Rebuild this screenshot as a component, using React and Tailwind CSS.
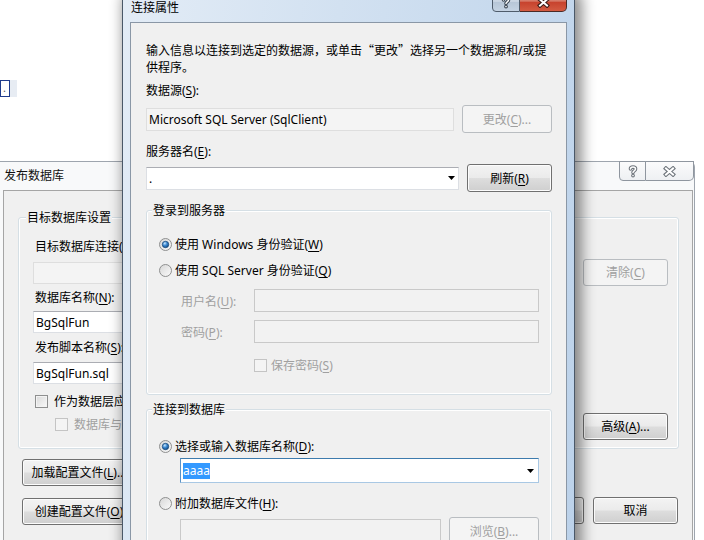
import React from "react";

const U = ({ children }) => <span className="underline decoration-1 underline-offset-[2px]">{children}</span>;

function Btn({ children, disabled, className = "" }) {
  const tone = disabled
    ? "border-[#b9bdc1] bg-[#f4f4f4] text-[#a0a0a0]"
    : "border-[#707070] bg-[linear-gradient(#f3f3f3_0%,#ebebeb_48%,#dddddd_52%,#cfcfcf_100%)] text-black shadow-[inset_0_0_0_1px_#fcfcfc]";
  return <div className={`flex shrink-0 items-center justify-center whitespace-nowrap rounded-[3px] border ${tone} ${className}`}>{children}</div>;
}

function Box({ children, variant = "white", className = "" }) {
  const tone = {
    white: "border-[#dcdfe4] border-t-[#abadb3] bg-white",
    off: "border-[#c9c9c9] bg-[#f2f2f2]",
    faint: "border-[#dedede] bg-[#f4f4f4]",
    focus: "border-[#a9c8e4] border-t-[#3d7bad] border-l-[#5c93c6] bg-white",
  }[variant];
  return <div className={`flex shrink-0 items-center border ${tone} ${className}`}>{children}</div>;
}

const Arrow = () => (
  <svg width="7" height="4" viewBox="0 0 7 4" className="shrink-0">
    <path d="M0 0h7L3.5 4z" fill="#000" />
  </svg>
);

function Radio({ checked }) {
  return (
    <svg width="13" height="13" viewBox="0 0 13 13" className="shrink-0">
      <defs>
        <linearGradient id="radioFace" x1="0" y1="0" x2="1" y2="1">
          <stop offset="0" stopColor="#d6d6d6" />
          <stop offset="1" stopColor="#fbfbfb" />
        </linearGradient>
        <radialGradient id="radioDot" cx="0.38" cy="0.32" r="0.75">
          <stop offset="0" stopColor="#c8e8ff" />
          <stop offset="0.45" stopColor="#3d8ad3" />
          <stop offset="1" stopColor="#0c457f" />
        </radialGradient>
      </defs>
      <circle cx="6.5" cy="6.5" r="6" fill="url(#radioFace)" stroke="#8e8f8f" />
      {checked && <circle cx="6.5" cy="6.5" r="3.2" fill="url(#radioDot)" stroke="#1b4a7a" strokeWidth="0.8" />}
    </svg>
  );
}

function Check({ disabled }) {
  return (
    <div
      className={`h-[13px] w-[13px] shrink-0 border ${
        disabled ? "border-[#c4c4c4] bg-[#f4f4f4]" : "border-[#8e8f8f] bg-[linear-gradient(135deg,#d9d9d9,#f9f9f9)] shadow-[inset_0_0_0_1px_#f3f3f3]"
      }`}
    />
  );
}

function Group({ label, className = "", labelClass = "", children }) {
  return (
    <div className={`relative shrink-0 rounded-[3px] border border-[#d5dfe5] shadow-[inset_0_0_0_1px_#ffffff] ${className}`}>
      <span className={`absolute top-[-9px] bg-[#f0f0f0] px-[1px] leading-[17px] ${labelClass}`}>{label}</span>
      {children}
    </div>
  );
}

const CloseGlyph = ({ edge }) => (
  <svg width="13" height="11" viewBox="0 0 13 11">
    <path d="M3 2.5l7 6M10 2.5l-7 6" stroke={edge} strokeWidth="4.2" strokeLinecap="square" fill="none" />
    <path d="M3 2.5l7 6M10 2.5l-7 6" stroke="#fff" strokeWidth="2" strokeLinecap="square" fill="none" />
  </svg>
);

const HelpGlyph = ({ edge }) => (
  <svg width="10" height="13" viewBox="0 0 10 13">
    <path d="M2.5 4C2.5 1.4 7.5 1.4 7.5 4 7.5 5.9 5 5.7 5 7.6" stroke={edge} strokeWidth="3.6" strokeLinecap="round" fill="none" />
    <circle cx="5" cy="10.6" r="1.9" fill={edge} />
    <path d="M2.5 4C2.5 1.4 7.5 1.4 7.5 4 7.5 5.9 5 5.7 5 7.6" stroke="#fff" strokeWidth="1.5" strokeLinecap="round" fill="none" />
    <circle cx="5" cy="10.6" r="0.8" fill="#fff" />
  </svg>
);

function Label({ children, className = "" }) {
  return <div className={`h-[17px] shrink-0 whitespace-nowrap leading-[17px] ${className}`}>{children}</div>;
}

function PublishWindow() {
  return (
    <div className="absolute left-[-5px] top-[161px] h-[400px] w-[700px] rounded-tr-[6px] border border-[#9ea5ae] bg-[#f8f9fa] pl-[7px] pr-[1px]">
      <div className="flex h-[28px] items-center pb-[1px] pl-[1px] text-[#111]">发布数据库</div>
      <div className="absolute right-0 top-[-1px] flex">
        <div className="flex h-[20px] w-[27px] items-center justify-center rounded-bl-[4px] border border-[#8f969f] bg-[linear-gradient(#fbfbfc,#eef0f3)]">
          <HelpGlyph edge="#6f757c" />
        </div>
        <div className="flex h-[20px] w-[48px] items-center justify-center rounded-br-[5px] border border-l-0 border-[#8f969f] bg-[linear-gradient(#fbfbfc,#eef0f3)]">
          <CloseGlyph edge="#6f757c" />
        </div>
      </div>
      <div className="flex h-[360px] flex-col border border-[#a5a5a5] bg-[#f0f0f0]">
        <Group label="目标数据库设置" labelClass="left-[7px]" className="ml-[14px] mt-[26px] flex h-[232px] w-[661px] flex-col pl-[14px] pr-[10px] pt-[20px]">
          <Label className="ml-[2px]">目标数据库连接(<U>T</U>):</Label>
          <div className="mt-[4px] flex h-[27px] items-center justify-between">
            <Box variant="faint" className="h-[22px] w-[537px]" />
            <Btn disabled className="h-[27px] w-[85px]">清除(<U>C</U>)</Btn>
          </div>
          <Label className="mt-[3px] ml-[2px]">数据库名称(<U>N</U>):</Label>
          <Box className="mt-[5px] h-[22px] w-[537px] pl-[2px]">BgSqlFun</Box>
          <Label className="mt-[6px] ml-[2px]">发布脚本名称(<U>S</U>):</Label>
          <Box className="mt-[6px] h-[22px] w-[537px] pl-[2px]">BgSqlFun.sql</Box>
          <div className="flex justify-between">
            <div className="flex flex-col whitespace-nowrap">
              <div className="ml-[2px] mt-[9px] flex h-[17px] items-center gap-[6px]">
                <Check />
                <span>作为数据层应用程序发布</span>
              </div>
              <div className="ml-[22px] mt-[6px] flex h-[17px] items-center gap-[6px] text-[#a0a0a0]">
                <Check disabled />
                <span>数据库与</span>
              </div>
            </div>
            <Btn className="mt-[29px] h-[27px] w-[85px]">高级(<U>A</U>)...</Btn>
          </div>
        </Group>
        <div className="mt-[10px] flex justify-between pl-[18px] pr-[14px]">
          <div className="flex flex-col">
            <Btn className="h-[27px] w-[114px]">加载配置文件(<U>L</U>)...</Btn>
            <Btn className="mt-[12px] h-[27px] w-[114px]">创建配置文件(<U>O</U>)</Btn>
          </div>
          <div className="mt-[38px] flex gap-[9px]">
            <Btn className="h-[27px] w-[85px]">发布(<U>P</U>)</Btn>
            <Btn className="h-[27px] w-[85px]">取消</Btn>
          </div>
        </div>
      </div>
    </div>
  );
}

function ConnectionWindow() {
  return (
    <div className="absolute left-[122px] top-[-8px] h-[560px] w-[453px] rounded-t-[7px] border border-[#4a5868] bg-[linear-gradient(100deg,#e3ecf6_0%,#d2e1f1_40%,#bcd2ea_100%)] px-[7px] shadow-[4px_2px_14px_3px_rgba(0,0,0,0.45)]">
      <div className="flex h-[29px] items-center pl-[1px] text-black">连接属性</div>
      <div className="absolute right-[7px] top-[-1px] flex">
        <div className="flex h-[20px] w-[28px] items-center justify-center rounded-bl-[4px] border border-[#4f5c6b] bg-[linear-gradient(#e0e8f1,#c7d3e1_50%,#b7c6d7_52%,#c5d3e3)]">
          <HelpGlyph edge="#3b4653" />
        </div>
        <div className="flex h-[20px] w-[47px] items-center justify-center rounded-br-[5px] border border-l-0 border-[#4a2a26] bg-[linear-gradient(#e6a194,#d57866_45%,#c7432e_52%,#d35b42)]">
          <CloseGlyph edge="#3c1c17" />
        </div>
      </div>
      <div className="flex h-[540px] flex-col border border-[#8a97a6] bg-[#f0f0f0] pl-[15px] pr-[14px] pt-[18px]">
        <div className="h-[34px] shrink-0 whitespace-nowrap leading-[17px]">
          输入信息以连接到选定的数据源，或单击<span className="font-['Noto_Sans_CJK_SC',sans-serif]">“</span>更改
          <span className="font-['Noto_Sans_CJK_SC',sans-serif]">”</span>选择另一个数据源和/或提
          <br />
          供程序。
        </div>
        <Label className="mt-[7px]">数据源(<U>S</U>):</Label>
        <div className="mt-[6px] flex h-[28px] shrink-0 items-center justify-between">
          <Box variant="faint" className="h-[23px] w-[308px] pl-[2px]">Microsoft SQL Server (SqlClient)</Box>
          <Btn disabled className="h-[28px] w-[90px]">更改(<U>C</U>)...</Btn>
        </div>
        <Label className="mt-[10px]">服务器名(<U>E</U>):</Label>
        <div className="mt-[4px] flex h-[28px] shrink-0 items-center justify-between">
          <Box className="h-[23px] w-[313px] justify-between pl-[2px] pr-[3px]">
            <span>.</span>
            <Arrow />
          </Box>
          <Btn className="h-[28px] w-[85px]">刷新(<U>R</U>)</Btn>
        </div>
        <Group label="登录到服务器" labelClass="left-[5px]" className="mt-[18px] flex h-[185px] flex-col pt-[25px]">
          <div className="ml-[12px] flex h-[17px] items-center gap-[3px]">
            <Radio checked />
            <span>使用 Windows 身份验证(<U>W</U>)</span>
          </div>
          <div className="ml-[12px] mt-[9px] flex h-[17px] items-center gap-[3px]">
            <Radio />
            <span>使用 SQL Server 身份验证(<U>Q</U>)</span>
          </div>
          <div className="ml-[34px] mt-[10px] flex h-[23px] items-center">
            <span className="w-[73px] pt-[2px] text-[#a0a0a0]">用户名(<U>U</U>):</span>
            <Box variant="off" className="h-[23px] w-[285px]" />
          </div>
          <div className="ml-[34px] mt-[8px] flex h-[23px] items-center">
            <span className="w-[73px] pt-[2px] text-[#a0a0a0]">密码(<U>P</U>):</span>
            <Box variant="off" className="h-[23px] w-[285px]" />
          </div>
          <div className="ml-[107px] mt-[14px] flex h-[17px] items-center gap-[4px] text-[#a0a0a0]">
            <Check disabled />
            <span>保存密码(<U>S</U>)</span>
          </div>
        </Group>
        <Group label="连接到数据库" labelClass="left-[5px]" className="mt-[14px] flex h-[160px] flex-col pt-[28px]">
          <div className="ml-[12px] flex h-[17px] items-center gap-[3px]">
            <Radio checked />
            <span>选择或输入数据库名称(<U>D</U>):</span>
          </div>
          <Box variant="focus" className="ml-[33px] mt-[3px] h-[25px] w-[359px] justify-between pl-[2px] pr-[4px]">
            <span className="bg-[#3399ff] leading-[16px] text-white">aaaa</span>
            <Arrow />
          </Box>
          <div className="ml-[12px] mt-[12px] flex h-[17px] items-center gap-[3px]">
            <Radio />
            <span>附加数据库文件(<U>H</U>):</span>
          </div>
          <div className="ml-[33px] mt-[5px] flex items-start gap-[8px]">
            <Box variant="off" className="mt-[2px] h-[23px] w-[261px]" />
            <Btn disabled className="h-[28px] w-[90px]">浏览(<U>B</U>)...</Btn>
          </div>
        </Group>
      </div>
    </div>
  );
}

export default function App() {
  return (
    <div className="relative h-[540px] w-[704px] overflow-hidden bg-white font-['Noto_Sans','Noto_Sans_CJK_SC',sans-serif] text-[12px] leading-[17px] text-black">
      <div className="absolute left-0 top-[80px] flex h-[17px]">
        <div className="h-full w-[10px] border border-[#1f3c8c] bg-white pl-[2px] text-[11px] leading-[13px] text-[#555]">.</div>
        <div className="h-full w-[7px] bg-[#e7ecf3]" />
      </div>
      <PublishWindow />
      <ConnectionWindow />
    </div>
  );
}
